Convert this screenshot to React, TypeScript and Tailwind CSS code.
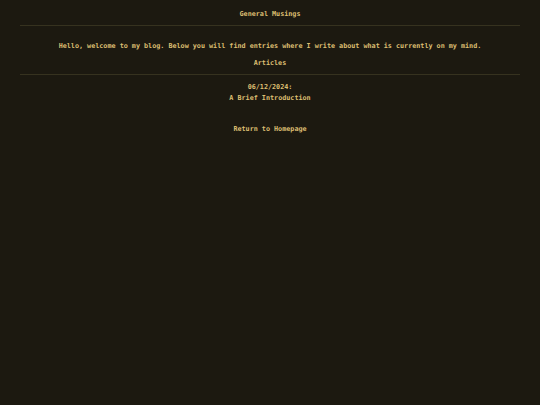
export default function App() {
  return (
    <main className="min-h-screen w-full bg-[#1c1910] px-[20px] text-center font-['DejaVu_Sans_Mono',monospace] text-[6.75px] leading-[11px] font-bold text-[#dcbf72]">
      <header className="pt-[9px] pb-[5px] border-b border-[#36321f]">
        <h1>General Musings</h1>
      </header>
      <section className="pt-[15px] pb-[5px] border-b border-[#36321f]">
        <p>Hello, welcome to my blog. Below you will find entries where I write about what is currently on my mind.</p>
        <h2 className="mt-[6px]">Articles</h2>
      </section>
      <ul className="pt-[7px]">
        <li>
          <div>06/12/2024:</div>
          <a href="#">A Brief Introduction</a>
        </li>
      </ul>
      <a href="#" className="mt-[20px] inline-block">Return to Homepage</a>
    </main>
  );
}
